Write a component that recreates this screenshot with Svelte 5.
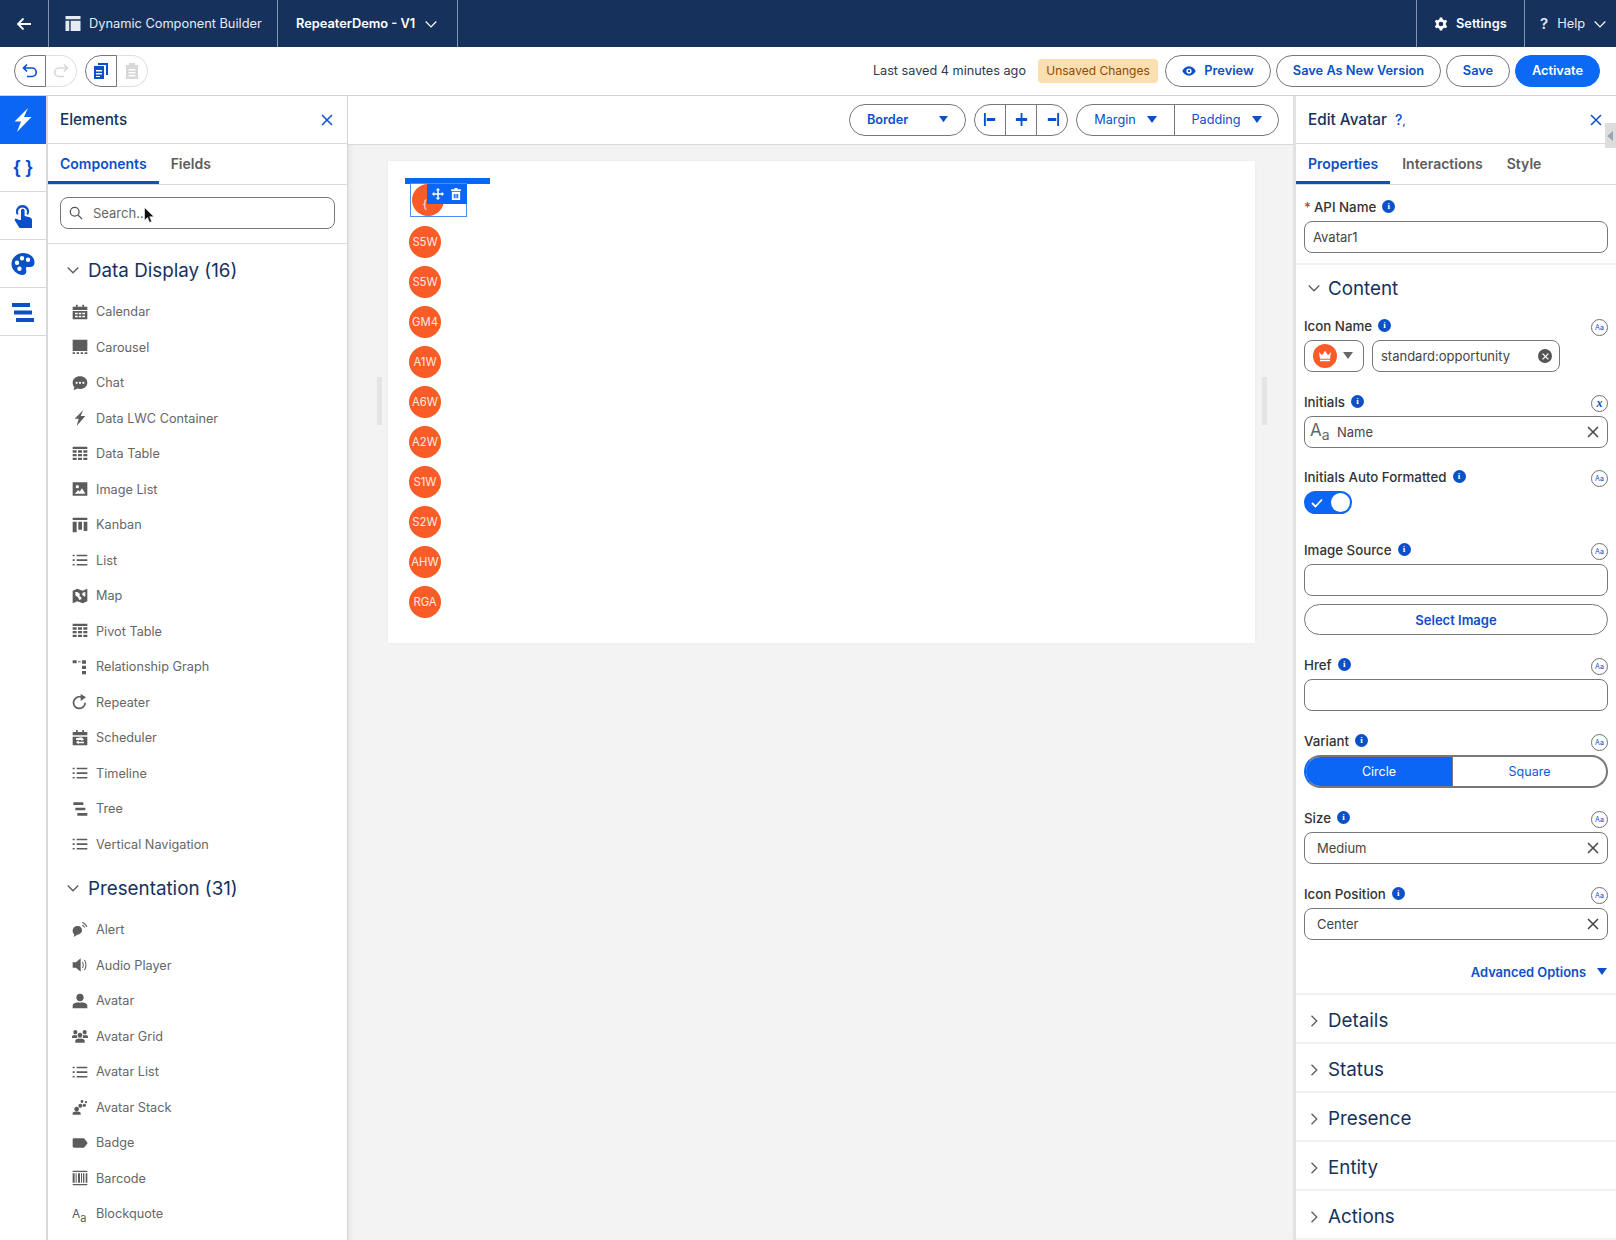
<script>
	const icons = {
		calendar: "M6 1h2.500v3H6zM15.500 1H18v3h-2.500zM1 4h22v5H1zM1 10.500h22V23H1zM4.500 13v2.500h4V13zM10 13v2.500h4V13zM15.500 13v2.500h4V13zM4.500 17.500V20h4v-2.500zM10 17.500V20h4v-2.500zM15.500 17.500V20h4v-2.500z",
		carousel: "M1 1h22v17H1zM1 20h3.500v2.500H1zM7 20h3.500v2.500H7zM13 20h3.500v2.500H13zM19 20h4v2.500h-4z",
		chat: "M12 2c6 0 11 4 11 9.500S18 21 12 21c-1.500 0-2.800-.2-4-.6L2.500 23l1-5C1.800 16.300 1 14 1 11.500 1 6 6 2 12 2zM7 10a1.700 1.700 0 1 0 0 3.400A1.700 1.700 0 0 0 7 10zM12 10a1.700 1.700 0 1 0 0 3.400 1.700 1.700 0 0 0 0-3.400zM17 10a1.700 1.700 0 1 0 0 3.400 1.700 1.700 0 0 0 0-3.400z",
		bolt: "M17 0 4 13h6L7 24l13-15h-7l4-9z",
		table: "M1 1h22v3.500H1zM1 6.500h6v3.500H1zM9 6.500h6v3.500H9zM17 6.500h6v3.500h-6zM1 12h6v3.500H1zM9 12h6v3.500H9zM17 12h6v3.500h-6zM1 17.500h6V21H1zM9 17.500h6V21H9zM17 17.500h6V21h-6z",
		image: "M1 2h22v20H1zM4 19h16l-5-8-3.500 5-2-2.500zM8 6a2.500 2.500 0 1 0 0 5 2.500 2.500 0 0 0 0-5z",
		kanban: "M1 1h22v3.500H1zM1 7h6v16H1zM9.500 7h5.500v12H9.500zM17.500 7H23v14h-5.500z",
		list: "M1 4h3v2.400H1zM7 4h16v2.400H7zM1 11h3v2.400H1zM7 11h16v2.400H7zM1 18h3v2.400H1zM7 18h16v2.400H7z",
		map: "M1 4l7-3 8 3 7-3v19l-7 3-8-3-7 3zM5 6v5l4 3 2 4 3-1v-3l-3-2 1-3-4-3zM16 7l-1 3 4 3 1-1V6z",
		graph: "M1 2h6v4.500H1zM9 3.500h4V5H9zM15 2h6v5h-6zM15 10h6v5h-6zM15 18h6v5h-6z",
		repeater: "M21 13A10 10 0 1 1 13 3.200V0l8 5-8 5.500V5.700A7.500 7.500 0 1 0 18.500 13z",
		scheduler: "M6 0h2.500v3H6zM15.500 0H18v3h-2.500zM1 3h22v5H1zM1 10h22v13H1zM6 12.500V15h8v2l4-3-4-3zM18 17.500h-8v-2l-4 3 4 3V20h8z",
		tree: "M2 2h15v4H2zM5 10h15v4H5zM8 18h15v4H8z",
		alert: "M1 13c0-4 3.500-7 7.500-7 4 0 6.500 2.800 6.500 6.500S12 19 8 19l-5.500 3.500 1-4C2 17.500 1 15.500 1 13zM15 1.500l.7-1.500c3.500 1 6.300 3.800 7.300 7.300l-1.500.5c-1-3-3.300-5.300-6.500-6.300zM15 5.500l.7-1.500c2 .7 3.300 2 4 4l-1.500.5c-.6-1.500-1.600-2.500-3.200-3z",
		audio: "M1 8h5l7-6v20l-7-6H1zM16 7c2 1.500 2 8.500 0 10l-1-1c1.500-1.500 1.500-6.500 0-8zM19 4c3.500 3 3.500 13 0 16l-1-1c2.800-3 2.800-11 0-14z",
		avatar: "M12 1c3.300 0 5.500 2.500 5.500 5.700S15.300 12.500 12 12.500 6.500 9.900 6.500 6.700 8.700 1 12 1zM1 23v-4c0-3 4-4.500 8-5 2 1 4 1 6 0 4 .5 8 2 8 5v4z",
		avatargrid: "M12 7c2.200 0 3.500 1.700 3.500 3.800s-1.300 3.700-3.500 3.700-3.500-1.600-3.500-3.700S9.800 7 12 7zM5 22v-3c0-2 3-3 5-3.300 1.300.6 2.700.6 4 0 2 .3 5 1.300 5 3.300v3zM5 3c2 0 3 1.500 3 3.300S7 9.500 5 9.500 2 8.100 2 6.300 3 3 5 3zM0 15v-2c0-1.500 2-2.300 3.500-2.500 1 .5 2 .5 3 0l1 .5c-.5 2 0 3 1 3.500-1 .3-2 .5-3 .5zM19 3c2 0 3 1.500 3 3.300s-1 3.200-3 3.200-3-1.400-3-3.200S17 3 19 3zM24 15v-2c0-1.500-2-2.300-3.500-2.500-1 .5-2 .5-3 0l-1 .5c.5 2 0 3-1 3.500 1 .3 2 .5 3 .5z",
		avatarstack: "M7 11.500c2.200 0 3.500 1.600 3.500 3.600S9.200 19 7 19s-3.500-1.900-3.500-3.900S4.800 11.500 7 11.500zM1 23.500v-2C1 19.500 3 19 5 19c1.300.5 2.700.5 4 0 2 0 4 .5 4 2.500v2zM12.500 7a3 3 0 1 1 0 6 3 3 0 0 1 0-6zM18.500 7a2.500 2.500 0 1 1 0 5 2.500 2.500 0 0 1 0-5zM15 1.500a2.200 2.200 0 1 1 0 4.400 2.200 2.200 0 0 1 0-4.400zM21 3a1.700 1.700 0 1 1 0 3.400A1.700 1.700 0 0 1 21 3z",
		badge: "M1 7c0-1.200 1-2 2-2h14c1 0 1.500.3 2 1l4.500 6-4.500 6c-.5.700-1 1-2 1H3c-1 0-2-.8-2-2z",
		barcode: "M1 1h22v2H1zM1 5h3v14H1zM5.500 5H7v14H5.500zM9 5h3v14H9zM13.500 5H15v14h-1.500zM16.500 5h2v14h-2zM20.500 5H23v14h-2.500zM1 21h22v2H1z"
	};

	const dataDisplay = [
		["Calendar", "calendar"], ["Carousel", "carousel"], ["Chat", "chat"], ["Data LWC Container", "bolt"],
		["Data Table", "table"], ["Image List", "image"], ["Kanban", "kanban"], ["List", "list"],
		["Map", "map"], ["Pivot Table", "table"], ["Relationship Graph", "graph"], ["Repeater", "repeater"],
		["Scheduler", "scheduler"], ["Timeline", "list"], ["Tree", "tree"], ["Vertical Navigation", "list"]
	];

	const presentation = [
		["Alert", "alert"], ["Audio Player", "audio"], ["Avatar", "avatar"], ["Avatar Grid", "avatargrid"],
		["Avatar List", "list"], ["Avatar Stack", "avatarstack"], ["Badge", "badge"], ["Barcode", "barcode"],
		["Blockquote", null]
	];

	const initials = ["S5W", "S5W", "GM4", "A1W", "A6W", "A2W", "S1W", "S2W", "AHW", "RGA"];
	const collapsed = ["Details", "Status", "Presence", "Entity", "Actions"];
</script>

{#snippet chev(dir)}
	<svg class="chev {dir}" viewBox="0 0 12 12"><path d="M.7 3.500L6 8.800l5.300-5.300" /></svg>
{/snippet}

{#snippet cross(cls)}
	<svg class="cross {cls}" viewBox="0 0 12 12"><path d="M1 1l10 10M11 1L1 11" /></svg>
{/snippet}

{#snippet caret(cls)}
	<svg class="caret {cls}" viewBox="0 0 10 8"><path d="M0 0h10L5 7z" /></svg>
{/snippet}

{#snippet label(text, mark = "Aa", required = false)}
	<div class="label-row">
		<span class="label">{#if required}<em>*</em>{/if}{text}</span>
		<span class="info">i</span>
		{#if mark}<span class="dyn" class:var={mark === "x"}>{mark}</span>{/if}
	</div>
{/snippet}

{#snippet group(title, items)}
	<h3 class="group-head">{@render chev("down")}{title}</h3>
	<ul class="items">
		{#each items as [name, icon]}
			<li>
				{#if icon}
					<svg class="item-icon" viewBox="0 0 24 24"><path fill-rule="evenodd" d={icons[icon]} /></svg>
				{:else}
					<span class="aa-icon">A<small>a</small></span>
				{/if}
				{name}
			</li>
		{/each}
	</ul>
{/snippet}

<div class="page">
	<header class="topbar">
		<button class="back" aria-label="Back">
			<svg viewBox="0 0 16 16"><path d="M15 8H2M7.500 2.500L2 8l5.500 5.500" /></svg>
		</button>
		<div class="app-name">
			<svg viewBox="0 0 16 16"><path fill-rule="evenodd" d="M0 0h16v3.500H0zM0 5h4v11H0zM5.500 5H16v11H5.500z" /></svg>
			Dynamic Component Builder
		</div>
		<div class="doc-name">RepeaterDemo - V1 {@render chev("down light")}</div>
		<div class="spacer"></div>
		<div class="settings">
			<svg viewBox="0 0 24 24"><path fill-rule="evenodd" d="M10 1h4l.8 3 2.700 1.500 3-.9 2 3.400-2.200 2.200v3.600l2.200 2.200-2 3.400-3-.9L14.800 20l-.8 3h-4l-.8-3-2.700-1.500-3 .9-2-3.400 2.200-2.200v-3.600L1.500 8l2-3.400 3 .9L9.200 4zM12 8a4 4 0 1 0 0 8 4 4 0 0 0 0-8z" /></svg>
			Settings
		</div>
		<div class="help"><b>?</b> Help {@render chev("down light")}</div>
	</header>

	<div class="actionbar">
		<div class="pill-pair">
			<button class="half on" aria-label="Undo">
				<svg viewBox="0 0 16 16"><path d="M5 1.500L1.500 5 5 8.500M1.500 5H10a4.200 4.200 0 0 1 0 8.500H5" /></svg>
			</button>
			<button class="half off" aria-label="Redo">
				<svg viewBox="0 0 16 16"><path d="M11 1.500L14.500 5 11 8.500M14.500 5H6a4.200 4.200 0 0 0 0 8.500h5" /></svg>
			</button>
		</div>
		<div class="pill-pair">
			<button class="half on" aria-label="Copy">
				<svg class="solid" viewBox="0 0 16 16"><path fill-rule="evenodd" d="M5 0h10v12h-2V2H5zM1 3h10v13H1zM3 7v1.500h6V7zM3 10v1.500h6V10zM3 13v1h4v-1z" /></svg>
			</button>
			<button class="half off" aria-label="Paste">
				<svg class="solid" viewBox="0 0 16 16"><path fill-rule="evenodd" d="M5 0h6v2h3v14H2V2h3zM4.500 6v1.500h7V6zM4.500 9v1.500h7V9zM4.500 12v1.500h7V12z" /></svg>
			</button>
		</div>
		<div class="spacer"></div>
		<span class="saved">Last saved 4 minutes ago</span>
		<span class="unsaved">Unsaved Changes</span>
		<button class="btn preview">
			<svg viewBox="0 0 24 24"><path fill-rule="evenodd" d="M12 4c5.500 0 9.500 4 11.500 8-2 4-6 8-11.500 8S2.500 16 .5 12c2-4 6-8 11.500-8zm0 3.500a4.500 4.500 0 1 0 0 9 4.500 4.500 0 0 0 0-9zm0 2.500a2 2 0 1 1 0 4 2 2 0 0 1 0-4z" /></svg>
			Preview
		</button>
		<button class="btn save-as">Save As New Version</button>
		<button class="btn save">Save</button>
		<button class="btn activate">Activate</button>
	</div>

	<div class="workspace">
		<nav class="rail">
			<div class="rail-item active">
				<svg viewBox="0 0 24 24"><path d="M17 0 3.500 13.500H10L6 24l14.500-15H13l4-9z" /></svg>
			</div>
			<div class="rail-item braces">{"{ }"}</div>
			<div class="rail-item">
				<svg viewBox="0 0 24 24"><path fill-rule="evenodd" d="M11.500 1a6.500 6.500 0 0 1 5.500 10l-1.500-1a4.500 4.500 0 1 0-8 0L6 11A6.500 6.500 0 0 1 11.500 1zM10 6.500a1.800 1.800 0 0 1 3.600 0V12l5 1.200c1.500.4 2.400 1.400 2.400 3V24H8.500L3.500 16l1-1.500 4 1.500h1.500z" /></svg>
			</div>
			<div class="rail-item">
				<svg viewBox="0 0 24 24"><path fill-rule="evenodd" d="M12 1c6.500 0 11.500 4 11.500 9.500 0 4-3 4.500-5 4.500h-2c-1.500 0-2 1-1.500 2.200.8 2 .3 5.800-3 5.800C6 23 .5 18 .5 12S6 1 12 1zM6 8.500a2.200 2.200 0 1 0 0 4.400 2.200 2.200 0 0 0 0-4.400zM11 4a2.200 2.200 0 1 0 0 4.400A2.200 2.200 0 0 0 11 4zM17 5.500a2.200 2.200 0 1 0 0 4.400 2.200 2.200 0 0 0 0-4.400zM8.500 14.500a2.200 2.200 0 1 0 0 4.400 2.200 2.200 0 0 0 0-4.400z" /></svg>
			</div>
			<div class="rail-item">
				<svg viewBox="0 0 24 24"><path d="M1 3h18v4H1zM3 10.500h18v4H3zM5 18h18v4H5z" /></svg>
			</div>
		</nav>

		<aside class="elements">
			<div class="panel-head">
				<h2>Elements</h2>
				{@render cross("blue close")}
			</div>
			<div class="tabs left-tabs">
				<span class="tab active">Components</span>
				<span class="tab">Fields</span>
			</div>
			<div class="search-wrap">
				<div class="search">
					<svg viewBox="0 0 16 16"><circle cx="6.500" cy="6.500" r="5" /><path d="M10.500 10.500L15 15" /></svg>
					Search...
				</div>
			</div>
			{@render group("Data Display (16)", dataDisplay)}
			{@render group("Presentation (31)", presentation)}
			<svg class="pointer" viewBox="0 0 10 16"><path d="M.5.500v13l3-3 2 5 2.200-1-2-4.700H10z" /></svg>
		</aside>

		<main class="canvas">
			<div class="canvas-bar">
				<div class="seg border-seg"><span>Border</span>{@render caret("small")}</div>
				<div class="seg align-seg">
					<span><svg viewBox="0 0 16 16"><path d="M1 1h2v14H1zM4 6.500h9v3H4z" /></svg></span>
					<span><svg viewBox="0 0 16 16"><path d="M7 1h2v14H7zM2 6.500h12v3H2z" /></svg></span>
					<span><svg viewBox="0 0 16 16"><path d="M13 1h2v14h-2zM3 6.500h9v3H3z" /></svg></span>
				</div>
				<div class="seg box-seg">
					<span>Margin {@render caret("")}</span>
					<span>Padding {@render caret("")}</span>
				</div>
			</div>

			<div class="stage">
				<i class="handle h-left"></i>
				<i class="handle h-right"></i>
				<section class="card">
					<div class="selected">
						<div class="drop-bar"></div>
						<div class="sel-box">
							<div class="avatar first">{"{"}</div>
							<div class="sel-tools">
								<svg viewBox="0 0 16 16"><path d="M8 0l3 3H9v4h4V5l3 3-3 3V9H9v4h2l-3 3-3-3h2V9H3v2L0 8l3-3v2h4V3H5z" /></svg>
								<svg viewBox="0 0 16 16"><path fill-rule="evenodd" d="M6 0h4v1.500h4.500V4h-13V1.500H6zM2.500 5h11v11h-11zM5 8v5.500h1.500V8zM7.300 8v5.500h1.500V8zM9.500 8v5.500H11V8z" /></svg>
							</div>
						</div>
					</div>
					<div class="avatars">
						{#each initials as text}
							<div class="avatar">{text}</div>
						{/each}
					</div>
				</section>
			</div>
		</main>

		<aside class="editor">
			<div class="panel-head">
				<h2>Edit Avatar <span class="qmark">?<small>,</small></span></h2>
				{@render cross("blue close")}
			</div>
			<div class="side-tab">
				<svg viewBox="0 0 8 12"><path d="M7 0v12L0 6z" /></svg>
			</div>
			<div class="tabs right-tabs">
				<span class="tab active">Properties</span>
				<span class="tab">Interactions</span>
				<span class="tab">Style</span>
			</div>

			<div class="api">
				{@render label("API Name", null, true)}
				<div class="input">Avatar1</div>
			</div>

			<h3 class="section-head open">{@render chev("down")}Content</h3>

			<div class="fields">
				<div class="field">
					{@render label("Icon Name")}
					<div class="icon-row">
						<div class="input picker">
							<span class="crown">
								<svg viewBox="0 0 24 24"><path d="M3 6l4.500 5L12 4l4.500 7L21 6l-1.500 10h-15zM4.500 17.500h15V20h-15z" /></svg>
							</span>
							{@render caret("gray")}
						</div>
						<div class="input icon-name">
							standard:opportunity
							<span class="clear-dot">{@render cross("white")}</span>
						</div>
					</div>
				</div>

				<div class="field">
					{@render label("Initials", "x")}
					<div class="input with-x">
						<span class="aa">A<small>a</small></span>
						Name
						{@render cross("dark")}
					</div>
				</div>

				<div class="field toggle-field">
					{@render label("Initials Auto Formatted")}
					<div class="toggle">
						<svg viewBox="0 0 12 10"><path d="M1 5l3.500 3.500L11 1.500" /></svg>
						<i></i>
					</div>
				</div>

				<div class="field">
					{@render label("Image Source")}
					<div class="input"></div>
					<button class="select-image">Select Image</button>
				</div>

				<div class="field">
					{@render label("Href")}
					<div class="input"></div>
				</div>

				<div class="field">
					{@render label("Variant")}
					<div class="variant">
						<span class="on">Circle</span>
						<span>Square</span>
					</div>
				</div>

				<div class="field">
					{@render label("Size")}
					<div class="input with-x pad">Medium {@render cross("dark")}</div>
				</div>

				<div class="field">
					{@render label("Icon Position")}
					<div class="input with-x pad">Center {@render cross("dark")}</div>
				</div>
			</div>

			<div class="advanced">Advanced Options {@render caret("")}</div>

			{#each collapsed as title}
				<h3 class="section-head">{@render chev("right")}{title}</h3>
			{/each}
		</aside>
	</div>
</div>

<style>
	:global(body) {
		margin: 0;
		background: #fff;
		font-family: Inter, "Liberation Sans", sans-serif;
		overflow: hidden;
	}

	button {
		font: inherit;
		background: none;
		cursor: pointer;
	}

	h2, h3, ul {
		margin: 0;
		padding: 0;
	}

	.page {
		width: 1616px;
		height: 1240px;
		display: flex;
		flex-direction: column;
		overflow: hidden;
	}

	.spacer {
		flex: 1;
	}

	/* chevrons, crosses, carets */
	.chev {
		width: 12px;
		height: 12px;
		fill: none;
		stroke: #5c5c5c;
		stroke-width: 1.300;
		flex: none;
	}

	.chev.right {
		transform: rotate(-90deg);
	}

	.chev.light {
		stroke: #fff;
		stroke-width: 1.200;
	}

	.cross {
		width: 12px;
		height: 12px;
		fill: none;
		stroke-width: 1.500;
		stroke: #444;
		flex: none;
	}

	.cross.blue {
		stroke: #0b50c8;
	}

	.cross.white {
		width: 7px;
		height: 7px;
		stroke: #fff;
		stroke-width: 2.200;
	}

	.caret {
		width: 10px;
		height: 8px;
		fill: #0b50c8;
		flex: none;
	}

	.caret.small {
		width: 9px;
		height: 7px;
	}

	.caret.gray {
		fill: #666;
	}

	/* top navy bar */
	.topbar {
		height: 47px;
		flex: none;
		display: flex;
		align-items: stretch;
		background: #16325c;
		color: #e6ebf2;
		font-size: 12.800px;
	}

	.topbar > div, .back {
		display: flex;
		align-items: center;
		border: 0;
		border-right: 1px solid #8396b0;
	}

	.back {
		width: 49px;
		justify-content: center;
		padding: 0;
	}

	.back svg {
		width: 16px;
		height: 16px;
		fill: none;
		stroke: #fff;
		stroke-width: 1.800;
	}

	.app-name {
		width: 229px;
		padding-left: 16px;
		gap: 8px;
		box-sizing: border-box;
	}

	.app-name svg {
		width: 16px;
		height: 15px;
		fill: #e6ebf2;
	}

	.doc-name {
		width: 180px;
		padding-left: 18px;
		gap: 10px;
		box-sizing: border-box;
		font-weight: 600;
		color: #fff;
	}

	.topbar > .spacer {
		border: 0;
	}

	.topbar .settings {
		width: 109px;
		box-sizing: border-box;
		padding-left: 17px;
		gap: 8px;
		font-weight: 600;
		color: #fff;
		border-left: 1px solid #8396b0;
	}

	.settings svg {
		width: 14px;
		height: 14px;
		fill: #fff;
	}

	.topbar .help {
		width: 91px;
		box-sizing: border-box;
		padding-left: 15px;
		gap: 9px;
		border: 0;
	}

	.help b {
		font-size: 15px;
		font-weight: 600;
	}

	/* actions row */
	.actionbar {
		height: 49px;
		flex: none;
		box-sizing: border-box;
		padding: 0 16px 1px 14px;
		display: flex;
		align-items: center;
		gap: 8px;
		border-bottom: 1px solid #d4d4d4;
	}

	.pill-pair {
		display: flex;
	}

	.half {
		width: 32px;
		height: 32px;
		padding: 0;
		display: flex;
		align-items: center;
		justify-content: center;
		border: 1px solid #777;
	}

	.half.on {
		border-radius: 16px 0 0 16px;
	}

	.half.off {
		border: 1px solid #e0e0e0;
		border-left: 0;
		border-radius: 0 16px 16px 0;
		width: 31px;
	}

	.half svg {
		width: 16px;
		height: 16px;
		fill: none;
		stroke: #0b50c8;
		stroke-width: 1.700;
	}

	.half svg.solid {
		fill: #0b50c8;
		stroke: none;
	}

	.half.off svg {
		stroke: #d8d8d8;
	}

	.half.off svg.solid {
		fill: #d8d8d8;
		stroke: none;
	}

	.saved {
		font-size: 12.700px;
		color: #2e3a4d;
		margin-right: 4px;
	}

	.unsaved {
		width: 120px;
		height: 24px;
		border-radius: 4px;
		background: #fbdfb0;
		color: #8c4b02;
		font-size: 12px;
		display: flex;
		align-items: center;
		justify-content: center;
		margin-right: 2px;
	}

	.btn {
		height: 32px;
		box-sizing: border-box;
		border: 1px solid #777;
		border-radius: 16px;
		font-size: 12.800px;
		font-weight: 600;
		color: #0b50c8;
		padding: 0;
		display: flex;
		align-items: center;
		justify-content: center;
		gap: 8px;
		margin-left: -3px;
	}

	.preview {
		width: 106px;
	}

	.preview svg {
		width: 14px;
		height: 14px;
		fill: #0b50c8;
	}

	.save-as {
		width: 165px;
	}

	.save {
		width: 64px;
	}

	.activate {
		width: 85px;
		background: #0b6af5;
		border-color: #0b6af5;
		color: #fff;
	}

	/* main columns */
	.workspace {
		flex: 1;
		display: flex;
		min-height: 0;
	}

	.rail {
		width: 46px;
		flex: none;
		border-right: 2px solid #d9d9d9;
	}

	.rail-item {
		height: 47px;
		display: flex;
		align-items: center;
		justify-content: center;
		border-bottom: 1px solid #d9d9d9;
		color: #0b50c8;
	}

	.rail-item svg {
		width: 24px;
		height: 26px;
		fill: #0b50c8;
	}

	.rail-item.active {
		background: #0b66f5;
		border-color: #0b66f5;
	}

	.rail-item.active svg {
		fill: #fff;
	}

	.braces {
		font: bold 18px "Liberation Sans", sans-serif;
	}

	.elements {
		position: relative;
		width: 299px;
		flex: none;
		overflow: hidden;
		border-right: 1px solid #d4d4d4;
	}

	.panel-head {
		height: 47px;
		display: flex;
		align-items: center;
		justify-content: space-between;
		padding: 0 14px 0 12px;
		border-bottom: 1px solid #d9d9d9;
	}

	.panel-head h2 {
		font-size: 15.300px;
		font-weight: 500;
		color: #16325c;
	}

	.tabs {
		height: 41px;
		box-sizing: border-box;
		display: flex;
		border-bottom: 1px solid #d9d9d9;
		font-size: 14px;
		font-weight: 600;
		color: #5c5c5c;
	}

	.tab {
		display: flex;
		align-items: center;
		box-sizing: border-box;
		padding: 2px 12px 0;
		height: 40px;
		border-bottom: 3px solid transparent;
		white-space: nowrap;
	}

	.tab.active {
		color: #0b50c8;
		border-bottom-color: #0b50c8;
	}

	.search-wrap {
		height: 59px;
		box-sizing: border-box;
		padding: 12px 12px 0;
		border-bottom: 1px solid #d9d9d9;
	}

	.search {
		height: 32px;
		box-sizing: border-box;
		border: 1px solid #777;
		border-radius: 8px;
		display: flex;
		align-items: center;
		gap: 10px;
		padding-left: 8px;
		font-size: 13px;
		color: #666;
	}

	.search svg {
		width: 14px;
		height: 14px;
		fill: none;
		stroke: #555;
		stroke-width: 1.500;
	}

	.pointer {
		position: absolute;
		left: 96px;
		top: 111px;
		width: 10px;
		height: 16px;
		fill: #111;
		stroke: #fff;
		stroke-width: .6;
	}

	.group-head {
		height: 50px;
		box-sizing: border-box;
		padding: 2px 0 0 19px;
		display: flex;
		align-items: center;
		gap: 9px;
		font-size: 18.800px;
		font-weight: 400;
		color: #16325c;
		white-space: nowrap;
	}

	.items {
		list-style: none;
	}

	.items li {
		height: 35.500px;
		display: flex;
		align-items: center;
		gap: 8px;
		padding-left: 24px;
		font-size: 12.700px;
		color: #666;
	}

	.item-icon {
		width: 16px;
		height: 16px;
		fill: #5c5c5c;
		flex: none;
	}

	.aa-icon {
		width: 16px;
		flex: none;
		font-size: 12px;
		color: #5c5c5c;
	}

	.aa-icon small {
		font-size: 11px;
		position: relative;
		top: 4px;
	}

	/* canvas */
	.canvas {
		flex: 1;
		display: flex;
		flex-direction: column;
		min-width: 0;
		background: #f3f3f3;
	}

	.canvas-bar {
		height: 49px;
		flex: none;
		box-sizing: border-box;
		background: #fff;
		border-bottom: 1px solid #d9d9d9;
		display: flex;
		align-items: center;
		justify-content: flex-end;
		gap: 8px;
		padding: 0 17px 1px 0;
	}

	.seg {
		height: 32px;
		box-sizing: border-box;
		border: 1px solid #777;
		border-radius: 16px;
		display: flex;
		font-size: 12.700px;
		color: #0b50c8;
		overflow: hidden;
	}

	.border-seg {
		width: 117px;
		align-items: center;
		justify-content: space-between;
		padding: 0 17px 0 17px;
		font-weight: 600;
	}

	.align-seg {
		width: 94px;
	}

	.align-seg span {
		flex: 1;
		display: flex;
		align-items: center;
		justify-content: center;
		border-left: 1px solid #777;
	}

	.align-seg span:first-child {
		border: 0;
	}

	.align-seg svg {
		width: 15px;
		height: 15px;
		fill: #0b50c8;
	}

	.box-seg {
		width: 203px;
		font-weight: 400;
	}

	.box-seg span {
		display: flex;
		align-items: center;
		justify-content: center;
		gap: 11px;
		width: 97px;
	}

	.box-seg span + span {
		flex: 1;
		border-left: 1px solid #777;
	}

	.stage {
		position: relative;
		flex: 1;
		padding: 16px 41px 0 40px;
		box-shadow: inset 5px 0 4px -3px #e4e4e4;
	}

	.handle {
		position: absolute;
		top: 232px;
		width: 5px;
		height: 48px;
		background: #e4e4e4;
	}

	.h-left {
		left: 29px;
	}

	.h-right {
		right: 29px;
	}

	.card {
		height: 482px;
		box-sizing: border-box;
		background: #fff;
		padding: 17px 0 0 17px;
		box-shadow: 0 0 3px rgba(0, 0, 0, .05);
	}

	.drop-bar {
		width: 85px;
		height: 6px;
		background: #0b66f5;
	}

	.sel-box {
		position: relative;
		width: 57px;
		height: 34px;
		box-sizing: border-box;
		margin: -1px 0 0 5px;
		border: 1px solid #4c8df5;
		padding-left: 1px;
	}

	.sel-tools {
		position: absolute;
		left: 16px;
		top: 0;
		width: 40px;
		height: 20px;
		background: #0b66f5;
		display: flex;
		align-items: center;
		justify-content: space-around;
		padding: 0 2px;
		box-sizing: border-box;
	}

	.sel-tools svg {
		width: 12px;
		height: 12px;
		fill: #fff;
	}

	.avatars {
		display: flex;
		flex-direction: column;
		gap: 8px;
		margin: 9px 0 0 4px;
	}

	.avatar {
		width: 32px;
		height: 32px;
		border-radius: 50%;
		background: #f95c27;
		color: #ffe9e0;
		font-size: 11.300px;
		display: flex;
		align-items: center;
		justify-content: center;
	}

	.avatar.first {
		box-sizing: border-box;
		padding: 8px 6px 0 0;
	}

	/* right editor */
	.editor {
		position: relative;
		width: 320px;
		flex: none;
		overflow: hidden;
		background: #fff;
		box-shadow: -3px 0 0 #e2e2e2;
		z-index: 1;
	}

	.qmark {
		font-size: 14px;
		color: #0b50c8;
		margin-left: 4px;
	}

	.side-tab {
		position: absolute;
		right: 0;
		top: 27px;
		width: 11px;
		height: 25px;
		background: #ddd;
		display: flex;
		align-items: center;
		justify-content: center;
	}

	.side-tab svg {
		width: 7px;
		height: 10px;
		fill: #9aa5b5;
	}

	.api {
		padding: 12px 8px 10px 8px;
		border-bottom: 2px solid #f0f0f0;
	}

	.label-row {
		height: 19px;
		margin-bottom: 5px;
		display: flex;
		align-items: center;
		gap: 6px;
		position: relative;
	}

	.label {
		font-size: 13.300px;
		font-weight: 500;
		color: #333;
		white-space: nowrap;
	}

	.label em {
		color: #c23934;
		font-style: normal;
		margin-right: 3px;
	}

	.info {
		width: 13px;
		height: 13px;
		border-radius: 50%;
		background: #0b50c8;
		color: #fff;
		font: bold 9px/13px "Liberation Serif", serif;
		text-align: center;
	}

	.dyn {
		position: absolute;
		right: 0;
		top: 3px;
		width: 15px;
		height: 15px;
		border: 1px solid #707070;
		border-radius: 50%;
		color: #0b50c8;
		font-size: 7px;
		line-height: 15px;
		text-align: center;
	}

	.dyn.var {
		font: italic bold 12px/14px "Liberation Serif", serif;
	}

	.input {
		height: 32px;
		box-sizing: border-box;
		border: 1px solid #777;
		border-radius: 8px;
		display: flex;
		align-items: center;
		padding-left: 8px;
		font-size: 13px;
		color: #444;
	}

	.section-head {
		height: 49px;
		box-sizing: border-box;
		padding: 4px 0 0 12px;
		display: flex;
		align-items: center;
		gap: 8px;
		font-size: 18.800px;
		font-weight: 400;
		color: #16325c;
		border-bottom: 2px solid #f0f0f0;
	}

	.section-head.open {
		height: 46px;
		padding-top: 0;
		border: 0;
	}

	.fields {
		display: flex;
		flex-direction: column;
		gap: 20px;
		padding: 5px 8px 0 8px;
	}

	.icon-row {
		display: flex;
		gap: 8px;
	}

	.picker {
		width: 60px;
		gap: 6px;
	}

	.crown {
		width: 24px;
		height: 24px;
		border-radius: 50%;
		background: #f95c27;
		display: flex;
		align-items: center;
		justify-content: center;
	}

	.crown svg {
		width: 16px;
		height: 16px;
		fill: #fff;
	}

	.icon-name {
		width: 188px;
		justify-content: space-between;
		padding-right: 7px;
	}

	.clear-dot {
		width: 14px;
		height: 14px;
		border-radius: 50%;
		background: #555;
		display: flex;
		align-items: center;
		justify-content: center;
	}

	.with-x {
		gap: 8px;
		padding-left: 5px;
		padding-right: 8px;
	}

	.with-x .cross {
		margin-left: auto;
	}

	.with-x.pad {
		padding-left: 12px;
	}

	.aa {
		font-size: 17px;
		color: #666;
		width: 19px;
		white-space: nowrap;
		margin-top: -4px;
	}

	.aa small {
		font-size: 14px;
		position: relative;
		top: 4px;
	}

	.toggle-field {
		margin: -1px 0 6px;
	}

	.toggle {
		width: 48px;
		height: 23px;
		border-radius: 12px;
		background: #0b66f5;
		position: relative;
	}

	.toggle svg {
		position: absolute;
		left: 7px;
		top: 7px;
		width: 12px;
		height: 10px;
		fill: none;
		stroke: #fff;
		stroke-width: 1.800;
	}

	.toggle i {
		position: absolute;
		right: 2px;
		top: 2px;
		width: 19px;
		height: 19px;
		border-radius: 50%;
		background: #fff;
	}

	.select-image {
		display: block;
		width: 100%;
		height: 31px;
		margin-top: 8px;
		border: 1px solid #777;
		border-radius: 16px;
		color: #0b50c8;
		font-size: 13px;
		font-weight: 600;
	}

	.variant {
		height: 33px;
		box-sizing: border-box;
		border: 2px solid #777;
		border-left-color: #0b66f5;
		border-radius: 17px;
		display: flex;
		overflow: hidden;
		font-size: 12.500px;
		color: #0b5cdb;
	}

	.variant span {
		flex: 1;
		display: flex;
		align-items: center;
		justify-content: center;
	}

	.variant .on {
		flex: none;
		width: 146px;
		background: #0b66f5;
		color: #fff;
		border-right: 1px solid #777;
	}

	.advanced {
		height: 16px;
		margin-top: 24px;
		margin-bottom: 13px;
		padding-right: 9px;
		display: flex;
		align-items: center;
		justify-content: flex-end;
		gap: 11px;
		font-size: 12.900px;
		font-weight: 600;
		color: #0b50c8;
	}

	.advanced + .section-head {
		border-top: 2px solid #f0f0f0;
		height: 51px;
	}
</style>
